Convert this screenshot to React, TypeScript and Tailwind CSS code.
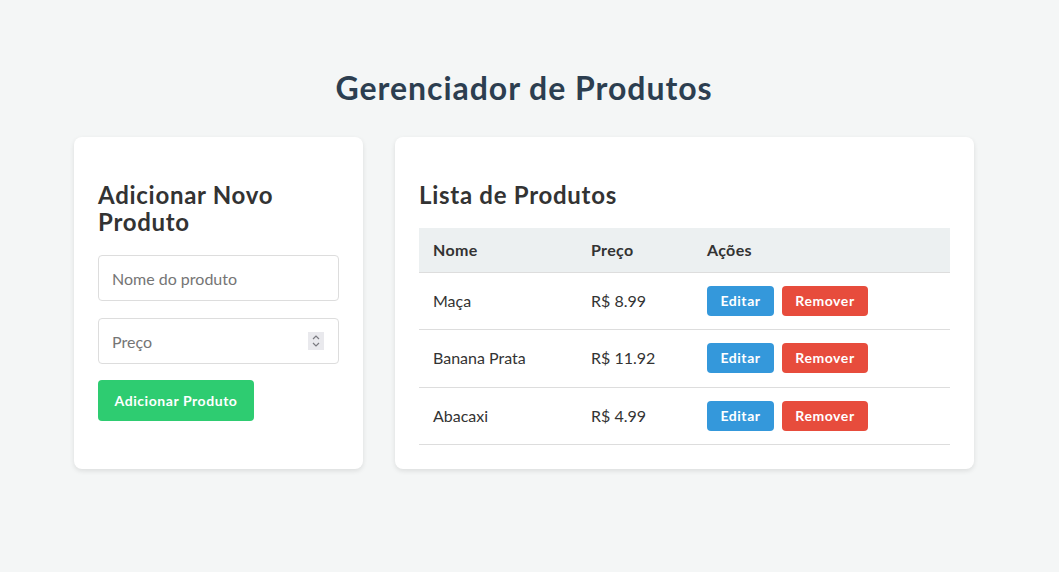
const produtos = [
  { nome: "Maça", preco: "R$ 8.99" },
  { nome: "Banana Prata", preco: "R$ 11.92" },
  { nome: "Abacaxi", preco: "R$ 4.99" },
];

function App() {
  return (
    <div
      className="min-h-screen bg-[#f4f6f6] pt-[69px] pr-[11px] text-[#333]"
      style={{ fontFamily: "Lato, 'Noto Sans', sans-serif" }}
    >
      <h1 className="text-center text-[32px] leading-[38px] font-bold tracking-[0.03em] text-[#2c3e50] mb-[30px]">
        Gerenciador de Produtos
      </h1>
      <div className="mx-auto w-[900px] flex gap-8">
        <div className="w-[289px] shrink-0 bg-white rounded-lg shadow-[0_2px_5px_rgba(0,0,0,0.1)] p-6">
          <h2 className="mt-5 mb-5 text-2xl leading-[27px] font-bold tracking-[0.03em] text-[#333]">
            Adicionar Novo Produto
          </h2>
          <input
            type="text"
            placeholder="Nome do produto"
            className="block w-full h-[46px] px-[13px] border border-[#ddd] rounded text-base leading-5 outline-none placeholder:text-[#757575]"
          />
          <div className="relative mt-[17px]">
            <input
              type="text"
              placeholder="Preço"
              className="block w-full h-[46px] px-[13px] border border-[#ddd] rounded text-base leading-5 outline-none placeholder:text-[#757575]"
            />
            <span className="absolute right-[15px] top-[14px] w-4 h-[18px] bg-[#e9e9ed] flex items-center justify-center">
              <svg width="10" height="14" viewBox="0 0 10 14" fill="none" stroke="#7a7a80" strokeWidth="1.2">
                <path d="M2 5 L5 2 L8 5" />
                <path d="M2 9 L5 12 L8 9" />
              </svg>
            </span>
          </div>
          <button className="mt-4 h-[41px] w-[156px] rounded bg-[#2ecc71] text-white text-sm font-bold tracking-[0.04em]">
            Adicionar Produto
          </button>
        </div>
        <div className="flex-1 bg-white rounded-lg shadow-[0_2px_5px_rgba(0,0,0,0.1)] p-6">
          <h2 className="mt-5 mb-5 text-2xl leading-[27px] font-bold tracking-[0.03em] text-[#333]">
            Lista de Produtos
          </h2>
          <table className="w-full border-collapse text-base">
            <thead>
              <tr className="bg-[#ecf0f1] border-b border-[#ddd]">
                <th className="w-[159px] h-[44px] px-[14px] text-left font-bold tracking-[0.02em]">Nome</th>
                <th className="w-[116px] px-[13px] text-left font-bold tracking-[0.02em]">Preço</th>
                <th className="px-[13px] text-left font-bold tracking-[0.02em]">Ações</th>
              </tr>
            </thead>
            <tbody>
              {produtos.map((p) => (
                <tr key={p.nome} className="border-b border-[#ddd]">
                  <td className="h-[57.5px] px-[14px]">{p.nome}</td>
                  <td className="px-[13px]">{p.preco}</td>
                  <td className="px-[13px]">
                    <div className="flex gap-2">
                      <button className="h-[30px] w-[67px] rounded bg-[#3498db] text-white text-sm font-bold tracking-[0.04em]">
                        Editar
                      </button>
                      <button className="h-[30px] w-[86px] rounded bg-[#e74c3c] text-white text-sm font-bold tracking-[0.04em]">
                        Remover
                      </button>
                    </div>
                  </td>
                </tr>
              ))}
            </tbody>
          </table>
        </div>
      </div>
    </div>
  );
}

export default App;
